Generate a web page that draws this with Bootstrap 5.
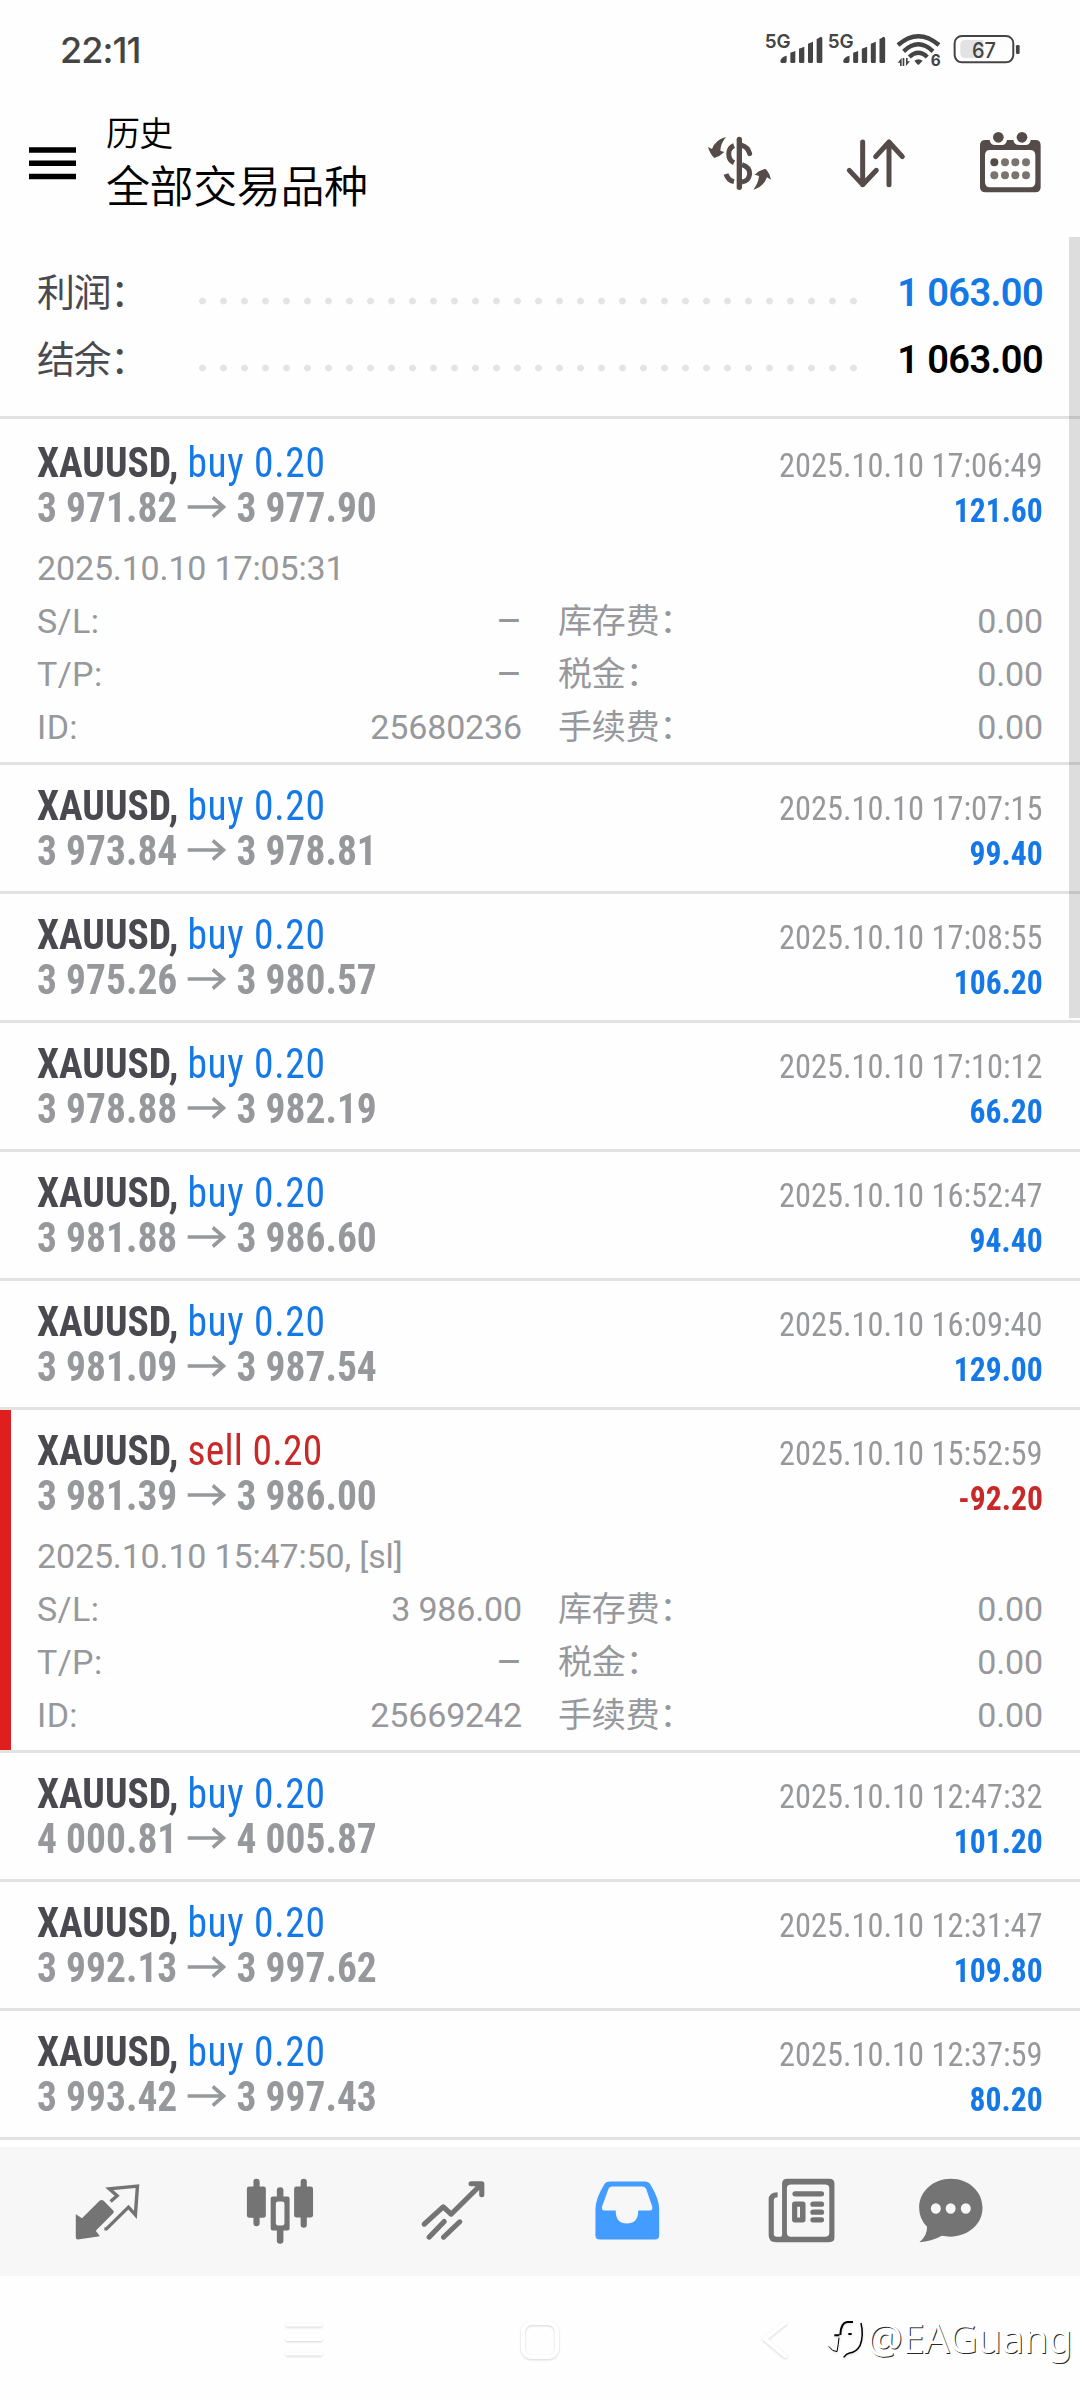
<!DOCTYPE html>
<html lang="zh-CN">
<head>
<meta charset="utf-8">
<meta name="viewport" content="width=device-width, initial-scale=1">
<title>历史</title>
<link href="https://cdn.jsdelivr.net/npm/bootstrap@5.3.0/dist/css/bootstrap.min.css" rel="stylesheet">
<style>
:root{--blue:#1478e6;--red:#c82828;--gray:#97989b;--dark:#4a494f}
body{font-family:Roboto,"Noto Sans CJK SC",sans-serif;background:#fefefe;color:var(--gray);font-size:34px;width:1080px;height:2400px;overflow:hidden;white-space:nowrap}
svg{display:block;flex:none}
.status-strip{height:96px;padding:0 59px 0 60px}
.clock{font:500 36px/1 Inter,sans-serif;color:#444;padding-top:32px;letter-spacing:-.9px}
.status-icons{margin-top:30px}
.app-head{height:141px;padding:14px 34px 0 29px;color:#000}
.menu-icon{margin-top:37px}
.titles{margin-left:30px;margin-top:4px;font-weight:350}
.title-sm{font-size:34px;line-height:40px;letter-spacing:-.8px}
.title-lg{font-size:44px;line-height:52px;margin-top:8px;letter-spacing:-.4px}
.tool-icons{gap:65.5px;margin-top:20px}
.summary{height:182px;padding:23px 37px 22px 37px;border-bottom:3px solid #e2e2e2}
.sum-line{height:67px;line-height:67px;font-size:38px}
.sum-label{width:155px;color:var(--dark);letter-spacing:-1.4px}
.dots{width:672px;height:8px;margin-top:37px;background:radial-gradient(circle at center,#e4e4e4 3px,transparent 3.8px) 0 0/21px 8px}
.sum-val{font-weight:600;letter-spacing:-.6px}
.deal{padding:18px 37px;border:0;border-bottom:3px solid #e2e2e2!important;background:transparent;color:var(--gray);height:129px}
.deal.open{height:343px}
.deal.first{height:346px;padding-top:21px}
.deal.stopped{box-shadow:inset 11px 0 0 #e01e1e}
.line{height:45px;line-height:45px}
.sq{display:inline-block;transform:scaleX(.94);transform-origin:0 50%;font-family:"Roboto Condensed",Roboto,sans-serif;font-size:42px}
.sq b{font-weight:700}
.side{letter-spacing:.7px}
.down.side{letter-spacing:.3px}
.sym{color:var(--dark)}
.rt{transform:scaleX(.953);transform-origin:100% 50%;font-size:34px}
.pl{font-weight:700;transform:scaleX(.93)}
.arr{display:inline-block;width:41px;height:22px;margin:0 11px 0 11px;vertical-align:4px}
.more{padding-top:12px}
.more-line{height:53px;line-height:53px;letter-spacing:-.15px}
.mid{width:485px;margin-right:36px}
.mid span:first-child{letter-spacing:.4px}
.dash{font-size:40px}
.up{color:var(--blue)}.down{color:var(--red)}
.tabs{height:129px;margin-top:7px;background:#f7f7f7;padding-left:72px;gap:101px}
.tabs svg:last-child{margin-left:-24px}
.sysnav{height:124px;padding-left:280px}
.sysnav svg{filter:drop-shadow(0 1px 1px rgba(0,0,0,.16))}
.sys-home{margin-left:185px}
.sys-back{margin-left:192px}
.mark-text{font:400 40px/56px "Noto Sans",sans-serif;color:#fff;text-shadow:1px 1px .6px rgba(0,0,0,.85);letter-spacing:-.4px}
.scroll-thumb{position:absolute;right:0;top:237px;width:11px;height:781px;background:rgba(0,0,0,.13)}
</style>
<script src="https://cdn.jsdelivr.net/npm/bootstrap@5.3.0/dist/js/bootstrap.bundle.min.js"></script>
</head>
<body class="position-relative">
<svg width="0" height="0" class="position-absolute"><symbol id="arrow" viewBox="0 0 41 22" preserveAspectRatio="none"><path d="M0 11H38M27 1.5L38.5 11L27 20.5" fill="none" stroke="#97989b" stroke-width="3.6"/></symbol></svg>

<div class="status-strip d-flex justify-content-between">
  <div class="clock">22:11</div>
  <svg class="status-icons" width="258.3" height="40" viewBox="250 90 775 120" fill="#444">
    <g font-family="Inter,sans-serif" font-weight="600" font-size="58"><text x="255" y="143" textLength="78" lengthAdjust="spacingAndGlyphs">5G</text><text x="444" y="143" textLength="78" lengthAdjust="spacingAndGlyphs">5G</text></g>
    <g id="bars"><path d="M302 184q2-14 19-17v17q0 5-5 5h-9q-5 0-5-5zM332 158l15-5v32q0 4-4 4h-7q-4 0-4-4zM358 146l16-6v45q0 4-4 4h-8q-4 0-4-4zM385 131l15-6v60q0 4-4 4h-7q-4 0-4-4zM411 117q8-3 11-7q6 0 6 5v70q0 4-4 4h-9q-4 0-4-4z"/></g>
    <use href="#bars" x="188.500"/>
    <g fill="none" stroke="#444" stroke-width="13"><path d="M655 135Q716 82 778 135M672 154Q716 112 760 154M689 171Q716 146 743 171"/></g>
    <path d="M704 182q12-9 25 0l-10 11q-3 3-6 0zM654 188l12-14v24h-5v-10zM669 174h5v24h-5zM679 174h5v10l7 0l-12 14z"/>
    <text x="753" y="198" font-family="Inter,sans-serif" font-weight="700" font-size="46">6</text>
    <rect x="825" y="108" width="176" height="79" rx="22" fill="none" stroke="#444" stroke-width="6"/>
    <path d="M858 120h53v54h-53q-16 0-16-16v-22q0-16 16-16z" fill="#e2e2e2"/>
    <rect x="1009" y="135" width="11" height="27" rx="4"/>
    <text x="877" y="173" font-family="Inter,sans-serif" font-weight="500" font-size="66" textLength="72" lengthAdjust="spacingAndGlyphs">67</text>
  </svg>
</div>

<header class="app-head d-flex align-items-start">
  <svg class="menu-icon" width="47" height="33"><path d="M0 3h47M0 16.300h47M0 29.500h47" stroke="#000" stroke-width="5.500"/></svg>
  <div class="titles"><div class="title-sm">历史</div><div class="title-lg">全部交易品种</div></div>
  <div class="tool-icons d-flex ms-auto">
    <svg width="70" height="65" viewBox="75 390 210 195" fill="none" stroke="#554b48" stroke-width="15">
      <path d="M178 418V562" stroke-linecap="round" stroke-width="16"/>
      <path d="M162 437C141 445 141 478 162 488" />
      <path d="M186 436Q204 441 209 461" stroke-linecap="round"/>
      <path d="M186 494Q210 502 209 522Q206 544 186 546"/>
      <path d="M138 522Q144 541 162 545"/>
      <path d="M84 441L96 447Q106 419 138 411Q122 430 121 452L133 456Q120 469 103 474Q90 462 84 441zM273 539L261 532Q250 561 220 569Q235 550 237 528L224 524Q237 510 257 507Q269 519 273 539z" fill="#554b48" stroke="none"/>
    </svg>
    <svg width="70" height="65" viewBox="482 390 210 195" fill="none" stroke="#554b48" stroke-width="15" stroke-linecap="round" stroke-linejoin="round"><path d="M547 426V554M507 511L547 554L588 511M626 554V426M586 470L626 426L666 470"/></svg>
    <svg width="70" height="65" viewBox="888 390 210 195" fill="#554b48">
      <path d="M917 420H929Q931 435 945 435H967Q978 435 981 420H1000Q1003 435 1017 435H1037Q1050 435 1052 420H1066Q1082 420 1082 436V562Q1082 577 1066 577H917Q900 577 900 562V436Q900 420 917 420zM930 450Q915 450 915 466V546Q915 562 930 562H1050Q1066 562 1066 546V466Q1066 450 1050 450z" fill-rule="evenodd"/>
      <circle cx="955" cy="412" r="16"/><circle cx="1026" cy="412" r="16"/><circle cx="943" cy="487" r="12"/>
      <g fill="#7b736f"><circle cx="975" cy="487" r="12"/><circle cx="1006" cy="487" r="12"/><circle cx="1038" cy="487" r="12"/><circle cx="943" cy="526" r="12"/><circle cx="975" cy="526" r="12"/><circle cx="1006" cy="526" r="12"/><circle cx="1038" cy="526" r="12"/></g>
    </svg>
  </div>
</header>

<main>
<section class="summary">
  <div class="sum-line d-flex"><span class="sum-label">利润：</span><span class="dots"></span><span class="sum-val up ms-auto">1 063.00</span></div>
  <div class="sum-line d-flex"><span class="sum-label">结余：</span><span class="dots"></span><span class="sum-val text-black ms-auto">1 063.00</span></div>
</section>

<div class="list-group list-group-flush">
  <div class="list-group-item deal open first">
    <div class="line d-flex justify-content-between align-items-baseline"><span class="sq"><b class="sym">XAUUSD,</b> <span class="up side">buy 0.20</span></span><span class="sq rt">2025.10.10 17:06:49</span></div>
    <div class="line d-flex justify-content-between align-items-baseline"><span class="sq"><b>3 971.82</b><svg class="arr"><use href="#arrow"/></svg><b>3 977.90</b></span><span class="sq rt pl up">121.60</span></div>
    <div class="more">
      <div class="more-line">2025.10.10 17:05:31</div>
      <div class="more-line d-flex"><div class="mid d-flex justify-content-between"><span>S/L:</span><span class="dash">–</span></div><span>库存费：</span><span class="ms-auto">0.00</span></div>
      <div class="more-line d-flex"><div class="mid d-flex justify-content-between"><span>T/P:</span><span class="dash">–</span></div><span>税金：</span><span class="ms-auto">0.00</span></div>
      <div class="more-line d-flex"><div class="mid d-flex justify-content-between"><span>ID:</span><span>25680236</span></div><span>手续费：</span><span class="ms-auto">0.00</span></div>
    </div>
  </div>
  <div class="list-group-item deal">
    <div class="line d-flex justify-content-between align-items-baseline"><span class="sq"><b class="sym">XAUUSD,</b> <span class="up side">buy 0.20</span></span><span class="sq rt">2025.10.10 17:07:15</span></div>
    <div class="line d-flex justify-content-between align-items-baseline"><span class="sq"><b>3 973.84</b><svg class="arr"><use href="#arrow"/></svg><b>3 978.81</b></span><span class="sq rt pl up">99.40</span></div>
  </div>
  <div class="list-group-item deal">
    <div class="line d-flex justify-content-between align-items-baseline"><span class="sq"><b class="sym">XAUUSD,</b> <span class="up side">buy 0.20</span></span><span class="sq rt">2025.10.10 17:08:55</span></div>
    <div class="line d-flex justify-content-between align-items-baseline"><span class="sq"><b>3 975.26</b><svg class="arr"><use href="#arrow"/></svg><b>3 980.57</b></span><span class="sq rt pl up">106.20</span></div>
  </div>
  <div class="list-group-item deal">
    <div class="line d-flex justify-content-between align-items-baseline"><span class="sq"><b class="sym">XAUUSD,</b> <span class="up side">buy 0.20</span></span><span class="sq rt">2025.10.10 17:10:12</span></div>
    <div class="line d-flex justify-content-between align-items-baseline"><span class="sq"><b>3 978.88</b><svg class="arr"><use href="#arrow"/></svg><b>3 982.19</b></span><span class="sq rt pl up">66.20</span></div>
  </div>
  <div class="list-group-item deal">
    <div class="line d-flex justify-content-between align-items-baseline"><span class="sq"><b class="sym">XAUUSD,</b> <span class="up side">buy 0.20</span></span><span class="sq rt">2025.10.10 16:52:47</span></div>
    <div class="line d-flex justify-content-between align-items-baseline"><span class="sq"><b>3 981.88</b><svg class="arr"><use href="#arrow"/></svg><b>3 986.60</b></span><span class="sq rt pl up">94.40</span></div>
  </div>
  <div class="list-group-item deal">
    <div class="line d-flex justify-content-between align-items-baseline"><span class="sq"><b class="sym">XAUUSD,</b> <span class="up side">buy 0.20</span></span><span class="sq rt">2025.10.10 16:09:40</span></div>
    <div class="line d-flex justify-content-between align-items-baseline"><span class="sq"><b>3 981.09</b><svg class="arr"><use href="#arrow"/></svg><b>3 987.54</b></span><span class="sq rt pl up">129.00</span></div>
  </div>
  <div class="list-group-item deal open stopped">
    <div class="line d-flex justify-content-between align-items-baseline"><span class="sq"><b class="sym">XAUUSD,</b> <span class="down side">sell 0.20</span></span><span class="sq rt">2025.10.10 15:52:59</span></div>
    <div class="line d-flex justify-content-between align-items-baseline"><span class="sq"><b>3 981.39</b><svg class="arr"><use href="#arrow"/></svg><b>3 986.00</b></span><span class="sq rt pl down">-92.20</span></div>
    <div class="more">
      <div class="more-line">2025.10.10 15:47:50, [sl]</div>
      <div class="more-line d-flex"><div class="mid d-flex justify-content-between"><span>S/L:</span><span>3 986.00</span></div><span>库存费：</span><span class="ms-auto">0.00</span></div>
      <div class="more-line d-flex"><div class="mid d-flex justify-content-between"><span>T/P:</span><span class="dash">–</span></div><span>税金：</span><span class="ms-auto">0.00</span></div>
      <div class="more-line d-flex"><div class="mid d-flex justify-content-between"><span>ID:</span><span>25669242</span></div><span>手续费：</span><span class="ms-auto">0.00</span></div>
    </div>
  </div>
  <div class="list-group-item deal">
    <div class="line d-flex justify-content-between align-items-baseline"><span class="sq"><b class="sym">XAUUSD,</b> <span class="up side">buy 0.20</span></span><span class="sq rt">2025.10.10 12:47:32</span></div>
    <div class="line d-flex justify-content-between align-items-baseline"><span class="sq"><b>4 000.81</b><svg class="arr"><use href="#arrow"/></svg><b>4 005.87</b></span><span class="sq rt pl up">101.20</span></div>
  </div>
  <div class="list-group-item deal">
    <div class="line d-flex justify-content-between align-items-baseline"><span class="sq"><b class="sym">XAUUSD,</b> <span class="up side">buy 0.20</span></span><span class="sq rt">2025.10.10 12:31:47</span></div>
    <div class="line d-flex justify-content-between align-items-baseline"><span class="sq"><b>3 992.13</b><svg class="arr"><use href="#arrow"/></svg><b>3 997.62</b></span><span class="sq rt pl up">109.80</span></div>
  </div>
  <div class="list-group-item deal">
    <div class="line d-flex justify-content-between align-items-baseline"><span class="sq"><b class="sym">XAUUSD,</b> <span class="up side">buy 0.20</span></span><span class="sq rt">2025.10.10 12:37:59</span></div>
    <div class="line d-flex justify-content-between align-items-baseline"><span class="sq"><b>3 993.42</b><svg class="arr"><use href="#arrow"/></svg><b>3 997.43</b></span><span class="sq rt pl up">80.20</span></div>
  </div>
</div>
</main>
<div class="scroll-thumb"></div>

<nav class="tabs d-flex align-items-center">
  <svg width="72" height="72" viewBox="209 166.500 209 216" preserveAspectRatio="none" fill="#747474"><path d="M220 281L238 293L289 241Q295 236 301 241L328 269Q333 274 327 280L278 331L290 347L226 357Q220 357 220 350z"/><path d="M321 243L340 226L317 205L399 197L393 283L373 260L309 325H303" fill="none" stroke="#747474" stroke-width="10" stroke-linejoin="miter"/></svg>
  <svg width="72" height="72" viewBox="711.500 166.500 209 216" preserveAspectRatio="none" fill="#747474"><rect x="717" y="198" width="55" height="94" rx="7"/><rect x="736" y="175" width="18" height="142" rx="9"/><rect x="854" y="198" width="55" height="93" rx="7"/><rect x="873" y="175" width="18" height="147" rx="9"/><rect x="804" y="200" width="19" height="40" rx="9"/><rect x="804" y="320" width="19" height="50" rx="9"/><path d="M792 228h43q6 0 6 6v90q0 6-6 6h-43q-6 0-6-6v-90q0-6 6-6zM808 243q-7 0-7 7v58q0 7 7 7h11q7 0 7-7v-58q0-7-7-7z" fill-rule="evenodd"/></svg>
  <svg width="72" height="72" viewBox="1213.900 166.500 209 216" preserveAspectRatio="none" fill="none" stroke="#747474" stroke-width="15" stroke-linecap="round"><path d="M1232 311L1287 259L1310 281L1397 192M1368 190H1399V223M1246 350L1290 303M1288 350L1335 304" stroke-linejoin="round"/></svg>
  <svg width="72" height="72" viewBox="148.100 166.500 209 216" preserveAspectRatio="none" fill="#439cff"><path d="M204 183H304Q316 183 321 193Q346 236 346 266V344Q346 357 333 357H174Q161 357 161 344V266Q161 236 186 193Q191 183 204 183zM210 198Q202 198 199 205L180 259Q178 270 187 270H220V276Q222 309 252 309Q283 309 285 276V270H319Q328 270 326 259L308 205Q304 198 296 198z" fill-rule="evenodd"/></svg>
  <svg width="72" height="72" viewBox="650.500 166.500 209 216" preserveAspectRatio="none" fill="#747474"><path d="M718 175H840Q855 175 855 189V351Q855 365 840 365H686Q664 365 664 344V237Q664 216 690 215V230Q679 230 679 240V340Q679 349 688 349H696Q703 349 703 341V189Q703 175 718 175zM729 192Q717 192 717 203V337Q717 349 729 349H827Q840 349 840 337V203Q840 192 827 192z" fill-rule="evenodd"/><rect x="733" y="212" width="92" height="16" rx="8"/><path d="M740 243h23q8 0 8 8v47q0 8-8 8h-23q-8 0-8-8v-47q0-8 8-8zM747 259v32h8v-32z" fill-rule="evenodd"/><rect x="785" y="243" width="40" height="16" rx="8"/><rect x="785" y="267" width="40" height="16" rx="8"/><rect x="785" y="290" width="40" height="16" rx="8"/></svg>
  <svg width="72" height="72" viewBox="1083.200 166.500 209 216" preserveAspectRatio="none" fill="#747474"><path d="M1193 175C1245 175 1285 213 1285 262C1285 318 1231 359 1167 346Q1136 364 1102 365Q1125 345 1124 319Q1101 295 1101 262C1101 213 1142 175 1193 175zM1135 264a14.500 15.500 0 1 0 29 0a14.500 15.500 0 1 0-29 0zM1178 264a14.500 15.500 0 1 0 29 0a14.500 15.500 0 1 0-29 0zM1222 264a14.500 15.500 0 1 0 29 0a14.500 15.500 0 1 0-29 0z" fill-rule="evenodd"/></svg>
</nav>

<footer class="sysnav d-flex align-items-center">
  <svg width="50" height="48" stroke="#fff" stroke-width="3" stroke-linecap="round"><path d="M7 11h34M7 25.500h34M7 40h34"/></svg>
  <svg class="sys-home" width="50" height="48" fill="none" stroke="#fff" stroke-width="4"><rect x="8" y="9" width="34" height="34" rx="9"/></svg>
  <svg class="sys-back" width="34" height="48" fill="none" stroke="#fff" stroke-width="4" stroke-linecap="round" stroke-linejoin="round"><path d="M28 9L8 25L28 42"/></svg>
  <svg class="ms-auto" width="42" height="44" viewBox="10 35 126 132" fill="none" stroke="#000"><path d="M56 92Q57 56 76 53H94M38 93H53M80 89H90" stroke-width="6"/><path d="M118 56Q127 94 115 124Q104 144 84 146Q74 148 66 159" stroke-width="4.500"/><path d="M52 100Q50 122 46 142Q32 142 21 126" stroke-width="3"/></svg>
  <div class="mark-text me-2">@EAGuang</div>
</footer>
</body>
</html>
